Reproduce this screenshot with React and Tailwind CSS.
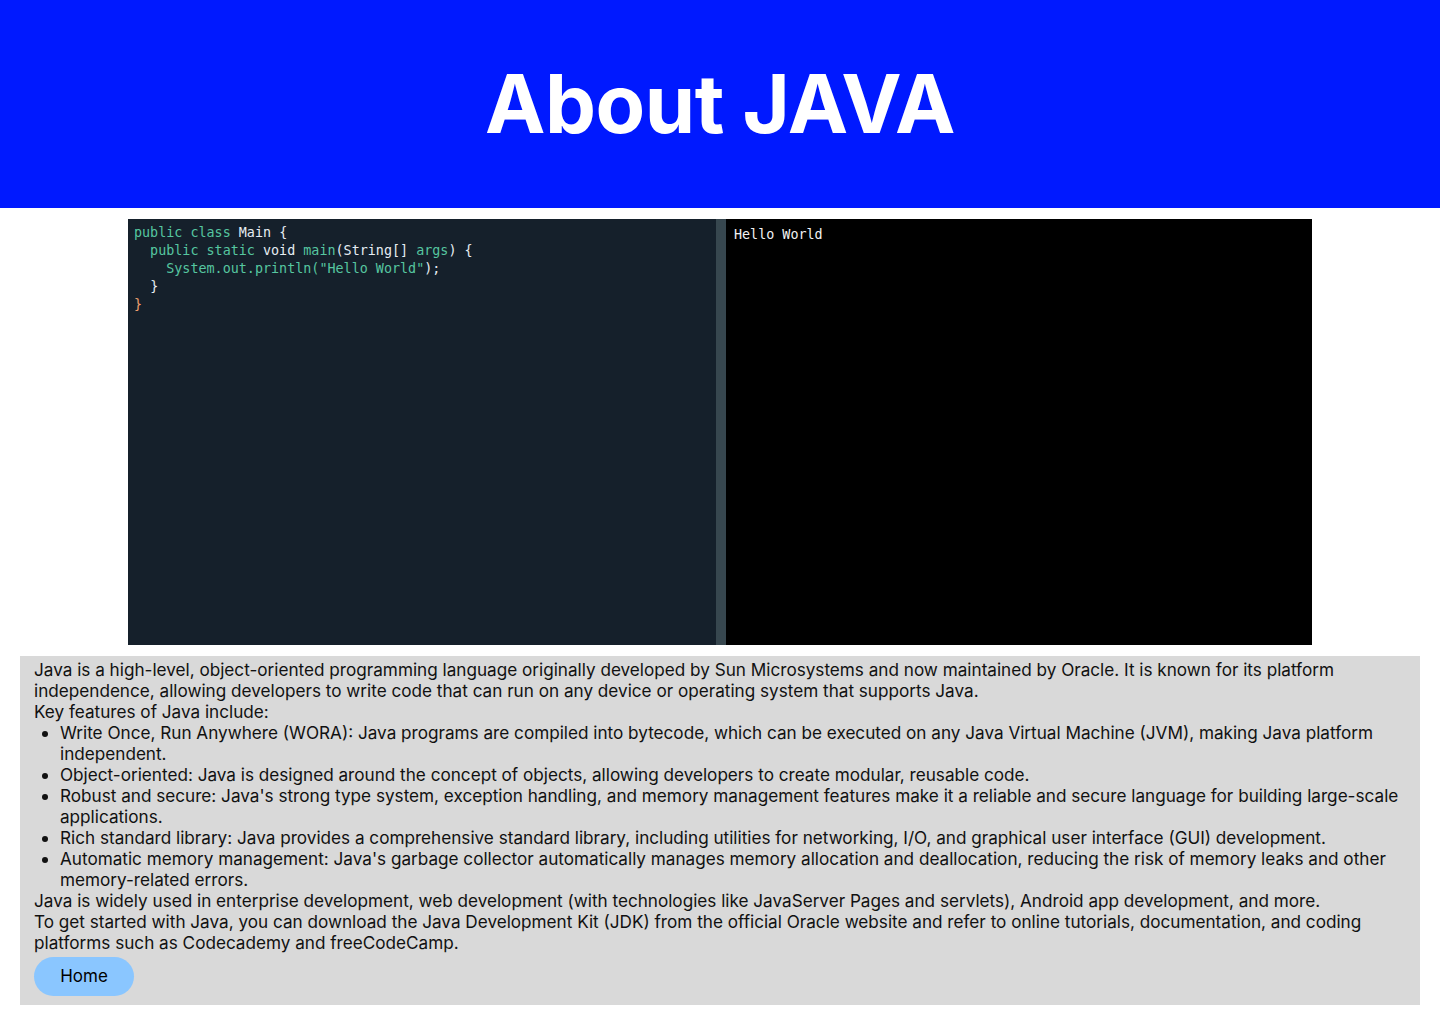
import React from 'react';

const mono = { fontFamily: '"DejaVu Sans Mono", "Liberation Mono", monospace' };

function Code() {
  const k = 'text-[#56c6a0]';
  const w = 'text-[#e6edf3]';
  return (
    <pre className="m-0 pl-[6px] pt-[5px] text-[13.4px] leading-[18px] whitespace-pre" style={mono}>
      <span className={k}>public class </span><span className={w}>Main {'{'}</span>{'\n'}
      <span className={k}>  public static </span><span className={w}>void </span><span className={k}>main</span><span className={w}>(String[] </span><span className={k}>args</span><span className={w}>) {'{'}</span>{'\n'}
      <span className={k}>    System.out.println(&quot;Hello World&quot;</span><span className={w}>);</span>{'\n'}
      <span className={w}>  {'}'}</span>{'\n'}
      <span className="text-[#f0a070]">{'}'}</span>
    </pre>
  );
}

export default function App() {
  return (
    <div className="min-h-screen bg-white" style={{ fontFamily: 'Inter, "Noto Sans", sans-serif' }}>
      <header className="h-[208px] bg-[#0019ff] flex items-center justify-center">
        <h1 className="text-white text-[81px] font-bold leading-none tracking-[-0.5px]">About JAVA</h1>
      </header>

      <div className="mx-auto mt-[11px] w-[1184px] h-[426px] flex">
        <div className="w-[588px] bg-[#15202b]">
          <Code />
        </div>
        <div className="w-[10px] bg-[#37474f]" />
        <div className="flex-1 bg-black">
          <pre className="m-0 pl-[8px] pt-[7px] text-[13.4px] leading-[18px] text-[#f2f2f2]" style={mono}>Hello World</pre>
        </div>
      </div>

      <section className="mx-5 mt-[11px] bg-[#d9d9d9] px-[14px] pt-[3px] pb-[9px] text-[17.15px] leading-[21px] text-[#111]">
        <p>Java is a high-level, object-oriented programming language originally developed by Sun Microsystems and now maintained by Oracle. It is known for its platform independence, allowing developers to write code that can run on any device or operating system that supports Java.</p>
        <p>Key features of Java include:</p>
        <ul className="list-disc pl-[26px]">
          <li>Write Once, Run Anywhere (WORA): Java programs are compiled into bytecode, which can be executed on any Java Virtual Machine (JVM), making Java platform independent.</li>
          <li>Object-oriented: Java is designed around the concept of objects, allowing developers to create modular, reusable code.</li>
          <li>Robust and secure: Java's strong type system, exception handling, and memory management features make it a reliable and secure language for building large-scale applications.</li>
          <li>Rich standard library: Java provides a comprehensive standard library, including utilities for networking, I/O, and graphical user interface (GUI) development.</li>
          <li>Automatic memory management: Java's garbage collector automatically manages memory allocation and deallocation, reducing the risk of memory leaks and other memory-related errors.</li>
        </ul>
        <p>Java is widely used in enterprise development, web development (with technologies like JavaServer Pages and servlets), Android app development, and more.</p>
        <p>To get started with Java, you can download the Java Development Kit (JDK) from the official Oracle website and refer to online tutorials, documentation, and coding platforms such as Codecademy and freeCodeCamp.</p>
        <button className="mt-[4px] w-[100px] h-[39px] rounded-full bg-[#8ac6ff] text-[17px] text-black">Home</button>
      </section>
    </div>
  );
}
